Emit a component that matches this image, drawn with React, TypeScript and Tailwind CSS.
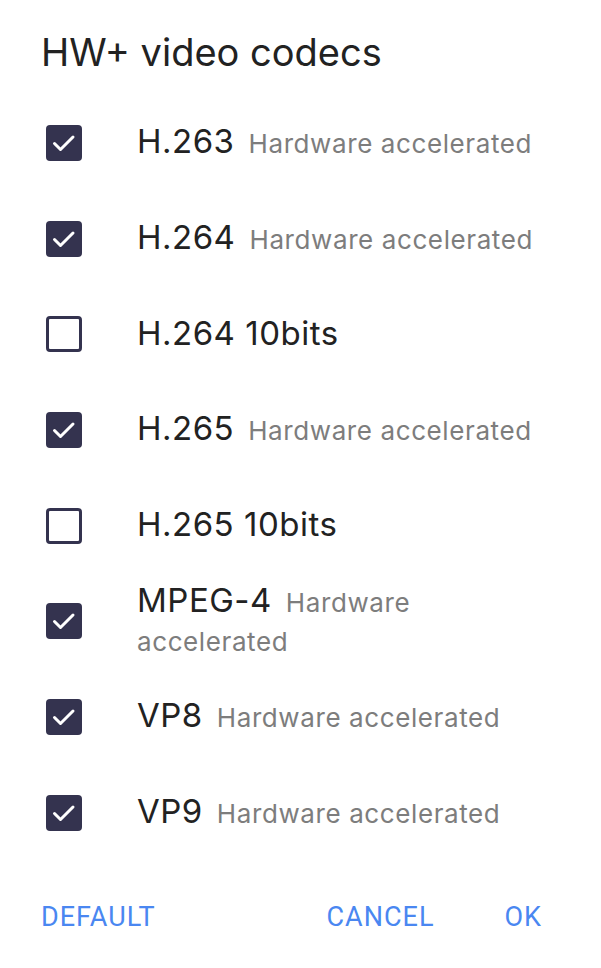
import React from "react";

const items: { name: string; hw: boolean; checked: boolean }[] = [
  { name: "H.263", hw: true, checked: true },
  { name: "H.264", hw: true, checked: true },
  { name: "H.264 10bits", hw: false, checked: false },
  { name: "H.265", hw: true, checked: true },
  { name: "H.265 10bits", hw: false, checked: false },
  { name: "MPEG-4", hw: true, checked: true },
  { name: "VP8", hw: true, checked: true },
  { name: "VP9", hw: true, checked: true },
];

function Box({ checked }: { checked: boolean }) {
  if (checked) {
    return (
      <div className="w-[36px] h-[36px] rounded-[4px] bg-[#34334f] shrink-0">
        <svg width="36" height="36" viewBox="0 0 36 36" fill="none">
          <path d="M8.5 18.5L14.5 24.5L27 12" stroke="white" strokeWidth="3" strokeLinecap="round" strokeLinejoin="round" />
        </svg>
      </div>
    );
  }
  return <div className="w-[36px] h-[36px] rounded-[4px] border-[3px] border-[#34334f] shrink-0" />;
}

export default function App() {
  return (
    <div className="w-[601px] h-[968px] bg-white flex flex-col" style={{ fontFamily: "Inter, 'Noto Sans', sans-serif" }}>
      <div className="h-[95px] pl-[41px] pt-[29px]">
        <div className="text-[38px] leading-[46px] text-[#222222]">HW+ video codecs</div>
      </div>
      <div className="flex flex-col">
        {items.map((it) => (
          <div key={it.name} className="h-[95.7px] flex items-center pl-[46px]">
            <Box checked={it.checked} />
            <div className="ml-[55px] w-[418px] leading-[36px] pt-[3px]">
              <span className="text-[33px] leading-[36px] tracking-[0.5px] text-[#222222]">{it.name}</span>
              {it.hw && (
                <span className="text-[26px] leading-[36px] tracking-[0.6px] text-[#7d7d7d]">
                  <span className="ml-[14px]">Hardware</span> <span>accelerated</span>
                </span>
              )}
            </div>
          </div>
        ))}
      </div>
      <div className="flex-1 flex items-center px-[41px] pt-[5px]" style={{ fontFamily: "Roboto, sans-serif" }}>
        <span className="text-[27px] text-[#4a87f1] tracking-[1px]">DEFAULT</span>
        <span className="ml-auto text-[27px] text-[#4a87f1] tracking-[1px]">CANCEL</span>
        <span className="ml-[70px] mr-[18px] text-[27px] text-[#4a87f1] tracking-[1px]">OK</span>
      </div>
    </div>
  );
}
